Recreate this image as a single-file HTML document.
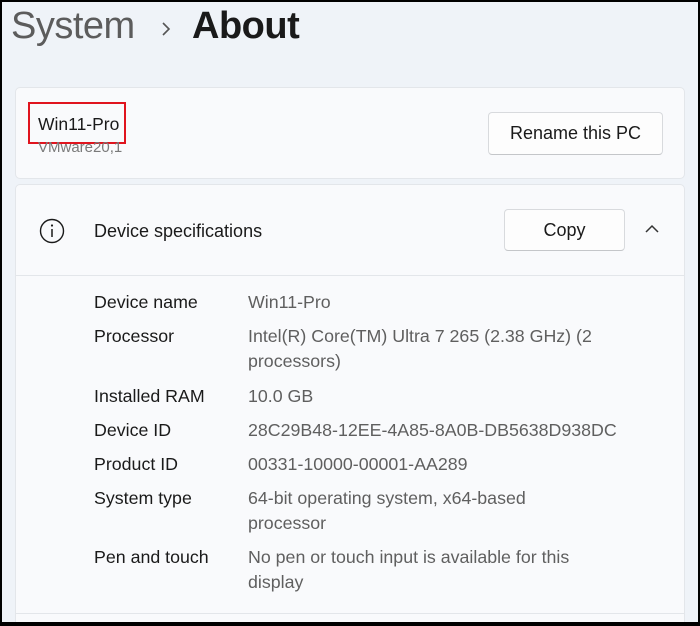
<!DOCTYPE html>
<html><head><style>
*{margin:0;padding:0;box-sizing:border-box}
body{width:700px;height:626px;overflow:hidden;background:#000;font-family:"Liberation Sans",sans-serif;position:relative}
#w{position:absolute;left:2px;top:2px;width:696px;height:620px;background:#eff3f8;overflow:hidden}
.a{position:absolute;white-space:nowrap}
.card{position:absolute;background:#f9fafc;border:1px solid #e3e6ea;border-radius:5px}
.btn{position:absolute;background:#fdfdfd;border:1px solid #d8dadd;border-bottom-color:#c4c6c9;border-radius:4px;font-size:18px;color:#1a1a1a;text-align:center}
.l{position:absolute;left:92px;font-size:17.8px;color:#1a1a1a;white-space:nowrap}
.v{position:absolute;left:246px;font-size:17.8px;color:#5f5f5f;line-height:25px;white-space:nowrap}
</style></head><body><div id="w">
<div class="a" style="left:9px;top:3px;font-size:38px;color:#5c5c5c;letter-spacing:-0.5px">System</div>
<svg class="a" style="left:158px;top:19px" width="12" height="16"><path d="M3 2 L9 8 L3 14" stroke="#555" stroke-width="1.6" fill="none"/></svg>
<div class="a" style="left:190px;top:3px;font-size:38px;color:#1a1a1a;font-weight:bold;letter-spacing:-0.5px">About</div>
<div class="card" style="left:13px;top:85px;width:670px;height:92px"></div>
<div class="a" style="left:26px;top:100px;width:98px;height:42px;border:2px solid #e0141e"></div>
<div class="a" style="left:36px;top:112px;font-size:17.5px;color:#1a1a1a">Win11-Pro</div>
<div class="a" style="left:36px;top:137px;font-size:15px;color:#7a7a7a">VMware20,1</div>
<div class="btn" style="left:486px;top:110px;width:175px;height:43px;line-height:41px">Rename this PC</div>
<div class="card" style="left:13px;top:182px;width:670px;height:460px"></div>
<div class="a" style="left:14px;top:273px;width:668px;height:1px;background:#e3e6ea"></div>
<div class="a" style="left:14px;top:611px;width:668px;height:1px;background:#e3e6ea"></div>
<svg class="a" style="left:36px;top:216px" width="28" height="28"><circle cx="14" cy="13" r="11.5" stroke="#1a1a1a" stroke-width="1.4" fill="none"/><line x1="14" y1="11" x2="14" y2="19" stroke="#1a1a1a" stroke-width="1.5"/><circle cx="14" cy="7.5" r="1.1" fill="#1a1a1a"/></svg>
<div class="a" style="left:92px;top:219px;font-size:18px;color:#1a1a1a">Device specifications</div>
<div class="btn" style="left:502px;top:207px;width:121px;height:42px;line-height:40px">Copy</div>
<svg class="a" style="left:642px;top:221px" width="18" height="12"><path d="M2 9 L8 3 L14 9" stroke="#333" stroke-width="1.5" fill="none"/></svg>
<div class="l" style="top:290px">Device name</div><div class="v" style="top:288px">Win11-Pro</div>
<div class="l" style="top:324px">Processor</div><div class="v" style="top:322px">Intel(R) Core(TM) Ultra 7 265 (2.38 GHz) (2<br>processors)</div>
<div class="l" style="top:384px">Installed RAM</div><div class="v" style="top:382px">10.0 GB</div>
<div class="l" style="top:418px">Device ID</div><div class="v" style="top:416px">28C29B48-12EE-4A85-8A0B-DB5638D938DC</div>
<div class="l" style="top:452px">Product ID</div><div class="v" style="top:450px">00331-10000-00001-AA289</div>
<div class="l" style="top:486px">System type</div><div class="v" style="top:484px">64-bit operating system, x64-based<br>processor</div>
<div class="l" style="top:545px">Pen and touch</div><div class="v" style="top:543px">No pen or touch input is available for this<br>display</div>
</div></body></html>
